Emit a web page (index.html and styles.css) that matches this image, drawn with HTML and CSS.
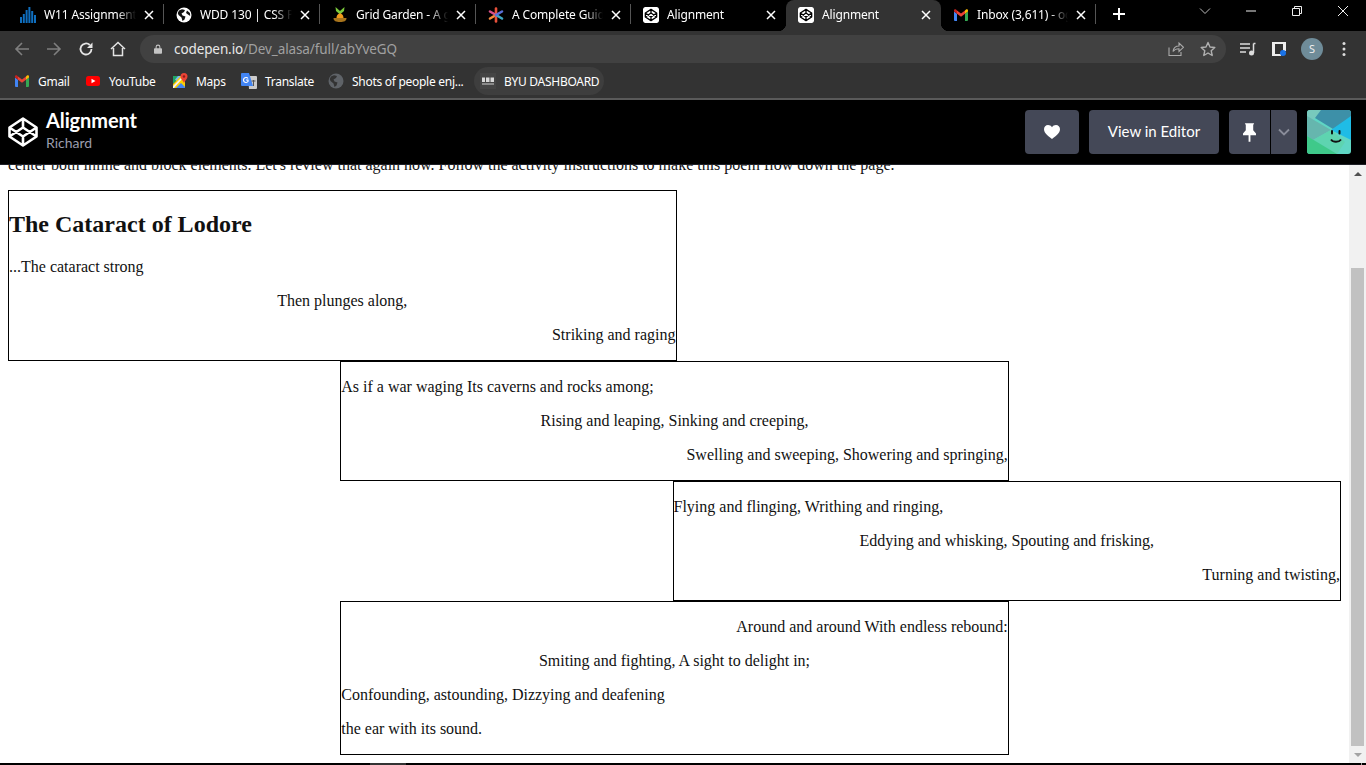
FILE: index.html
```html
<!DOCTYPE html>
<html lang="en">
<head>
<meta charset="utf-8">
<title>Alignment</title>
<link rel="stylesheet" href="styles.css">
</head>
<body>
<div class="browser">
  <div class="tabstrip">
    <div class="tab tab-wide tab-sep">
      <svg class="fav" viewBox="0 0 16 16"><path fill="#0f6fc0" d="M0 10h2v6H0zM2.800 7h2v9h-2zM5.600 3h2v13h-2zM8.400 0h2v16h-2zM11.200 4h2v12h-2zM14 8h2v8h-2z"/></svg>
      <span class="tab-title">W11 Assignment: CSS</span><svg class="tab-x" viewBox="0 0 10 10"><path d="M1 1 9 9M9 1 1 9"/></svg>
    </div>
    <div class="tab tab-wide tab-sep">
      <svg class="fav" viewBox="0 0 16 16"><circle cx="8" cy="8" r="7.500" fill="#fff"/><path fill="#111" d="M3 3.500 6 2.200 9 3 8 5 5.500 6.500 6.500 8.500 9.500 9.500 8.500 12.500 6.500 14 5.500 10.500 2.500 8 1.800 6ZM11 3.500 14 6 14.200 9 12 7.500 10 6Z"/></svg>
      <span class="tab-title">WDD 130 | CSS Positioning</span><svg class="tab-x" viewBox="0 0 10 10"><path d="M1 1 9 9M9 1 1 9"/></svg>
    </div>
    <div class="tab tab-wide tab-sep">
      <svg class="fav" viewBox="0 0 16 16"><path fill="#7ccb3c" d="M3.500 0 8 4 12.500 0 12 4 8 7.500 4 4Z"/><path fill="#f09a1c" d="M8 6.500C10.500 6.500 11.500 9 11.500 11H4.500C4.500 9 5.500 6.500 8 6.500Z"/><path fill="#a8741c" d="M1.500 11H14.500C14.500 14 12 15 8 15S1.500 14 1.500 11Z"/></svg>
      <span class="tab-title">Grid Garden - A game</span><svg class="tab-x" viewBox="0 0 10 10"><path d="M1 1 9 9M9 1 1 9"/></svg>
    </div>
    <div class="tab tab-sep">
      <svg class="fav" viewBox="0 0 16 16"><g stroke-width="2.600" stroke-linecap="round"><path stroke="#e8503a" d="M8 8V1.500"/><path stroke="#d94f8a" d="M8 8 2 4.500"/><path stroke="#f58a3c" d="M8 8 2 11.500"/><path stroke="#e8503a" d="M8 8V14.500"/><path stroke="#3fa7c4" d="M8 8 14 11.500"/><path stroke="#5a6fd8" d="M8 8 14 4.500"/></g></svg>
      <span class="tab-title">A Complete Guide to Flexbox</span><svg class="tab-x" viewBox="0 0 10 10"><path d="M1 1 9 9M9 1 1 9"/></svg>
    </div>
    <div class="tab">
      <svg class="fav fav-cp" viewBox="0 0 24 24"><rect width="24" height="24" rx="3" fill="#fff"/><g fill="none" stroke="#000" stroke-width="2" stroke-linejoin="round"><path d="M12 3.500 20.500 9V15L12 20.500 3.500 15V9ZM3.500 9 12 15 20.500 9M3.500 15 12 9 20.500 15M12 3.500V9M12 15V20.500"/></g></svg>
      <span class="tab-title">Alignment</span><svg class="tab-x" viewBox="0 0 10 10"><path d="M1 1 9 9M9 1 1 9"/></svg>
    </div>
    <div class="tab tab-active">
      <svg class="fav fav-cp" viewBox="0 0 24 24"><rect width="24" height="24" rx="3" fill="#fff"/><g fill="none" stroke="#000" stroke-width="2" stroke-linejoin="round"><path d="M12 3.500 20.500 9V15L12 20.500 3.500 15V9ZM3.500 9 12 15 20.500 9M3.500 15 12 9 20.500 15M12 3.500V9M12 15V20.500"/></g></svg>
      <span class="tab-title">Alignment</span><svg class="tab-x" viewBox="0 0 10 10"><path d="M1 1 9 9M9 1 1 9"/></svg>
    </div>
    <div class="tab tab-sep">
      <svg class="fav" viewBox="0 0 16 16"><path fill="#4285f4" d="M1 14V4.500L4 6.750V14H2a1 1 0 0 1-1-1Z"/><path fill="#34a853" d="M12 14V6.750L15 4.500V13a1 1 0 0 1-1 1Z"/><path fill="#ea4335" d="M4 6.750 8 9.750 12 6.750V3.400L8 6.400 4 3.400Z"/><path fill="#fbbc04" d="M12 6.750 15 4.500V3.500C15 2.400 13.800 1.900 13 2.600L12 3.400Z"/><path fill="#c5221f" d="M1 4.500 4 6.750V3.400L3 2.600C2.200 1.900 1 2.400 1 3.500Z"/></svg>
      <span class="tab-title">Inbox (3,611) - ogunbi</span><svg class="tab-x" viewBox="0 0 10 10"><path d="M1 1 9 9M9 1 1 9"/></svg>
    </div>
    <svg class="newtab" viewBox="0 0 14 14"><path d="M7 1V13M1 7H13" stroke="#fff" stroke-width="2"/></svg>
    <div class="winctl">
      <svg class="win" viewBox="0 0 12 12"><path d="M1 3.500 6 8.500 11 3.500" fill="none" stroke="#bbb"/></svg>
      <svg class="win" viewBox="0 0 12 12"><path d="M1 6H11" stroke="#eee"/></svg>
      <svg class="win" viewBox="0 0 12 12"><path d="M1.500 3.500H8.500V10.500H1.500ZM3.500 3.500V1.500H10.500V8.500H8.500" fill="none" stroke="#eee"/></svg>
      <svg class="win" viewBox="0 0 12 12"><path d="M1 1 11 11M11 1 1 11" stroke="#eee"/></svg>
    </div>
  </div>

  <div class="toolbar">
    <svg class="tool dim" viewBox="0 0 16 16"><path d="M15 8H2M8 2 2 8 8 14" fill="none" stroke="currentColor" stroke-width="1.600"/></svg>
    <svg class="tool dim" viewBox="0 0 16 16"><path d="M1 8H14M8 2 14 8 8 14" fill="none" stroke="currentColor" stroke-width="1.600"/></svg>
    <svg class="tool" viewBox="0 0 16 16"><path d="M13.500 8A5.500 5.500 0 1 1 11.800 4" fill="none" stroke="currentColor" stroke-width="1.800"/><path fill="currentColor" d="M14.500 1.500V7H9Z"/></svg>
    <svg class="tool" viewBox="0 0 16 16"><path d="M1 8 8 1.500 15 8M3.500 7V14.500H12.500V7" fill="none" stroke="currentColor" stroke-width="1.500"/></svg>
    <div class="omnibox">
      <svg class="lock" viewBox="0 0 10 12"><path fill="#c4c4c4" d="M1 5H2V3.500a3 3 0 0 1 6 0V5H9a1 1 0 0 1 1 1V11a1 1 0 0 1-1 1H1a1 1 0 0 1-1-1V6a1 1 0 0 1 1-1ZM3.300 5H6.700V3.500a1.700 1.700 0 0 0-3.400 0Z"/></svg>
      <span class="url"><span class="url-host">codepen.io</span>/Dev_alasa/full/abYveGQ</span>
      <svg class="omni-ico" viewBox="0 0 16 16"><path d="M1 6.500V14.500H13V11M5 10.500C5.500 7 8 5 11 5V2L15.500 6.300 11 10.500V7.800C8.500 7.800 6.500 8.500 5 10.500Z" fill="none" stroke="#aaa" stroke-width="1.100"/></svg>
      <svg class="omni-ico" viewBox="0 0 16 16"><path d="M8 1.500 10 6 14.800 6.500 11.200 9.700 12.200 14.500 8 12 3.800 14.500 4.800 9.700 1.200 6.500 6 6Z" fill="none" stroke="#b0b0b0" stroke-width="1.400" stroke-linejoin="round"/></svg>
    </div>
    <svg class="tool tool-media" viewBox="0 0 16 16"><path d="M0 3H10M0 7H10M0 11H6" stroke="#ddd" stroke-width="1.500"/><path d="M13.500 2.500H15.500M13.500 2.500V12" stroke="#ddd" stroke-width="1.500" fill="none"/><circle cx="11.500" cy="12" r="2.500" fill="#ddd"/></svg>
    <svg class="tool tool-ext" viewBox="0 0 14 14"><path fill="#eee" d="M0 0H14V9H11V2H3V12H9V14H0Z"/><circle cx="11" cy="11" r="3" fill="#1a73e8"/></svg>
    <span class="avatar-s">S</span>
    <svg class="tool tool-dots" viewBox="0 0 4 16"><circle cx="2" cy="2.500" r="1.500" fill="#ddd"/><circle cx="2" cy="8" r="1.500" fill="#ddd"/><circle cx="2" cy="13.500" r="1.500" fill="#ddd"/></svg>
  </div>

  <div class="bookmarks">
    <span class="bm bm-gmail">
      <svg class="bm-ico" viewBox="0 0 16 16"><path fill="#4285f4" d="M1 14V4.500L4 6.750V14H2a1 1 0 0 1-1-1Z"/><path fill="#34a853" d="M12 14V6.750L15 4.500V13a1 1 0 0 1-1 1Z"/><path fill="#ea4335" d="M4 6.750 8 9.750 12 6.750V3.400L8 6.400 4 3.400Z"/><path fill="#fbbc04" d="M12 6.750 15 4.500V3.500C15 2.400 13.800 1.900 13 2.600L12 3.400Z"/><path fill="#c5221f" d="M1 4.500 4 6.750V3.400L3 2.600C2.200 1.900 1 2.400 1 3.500Z"/></svg>Gmail</span>
    <span class="bm bm-yt">
      <svg class="bm-ico" viewBox="0 0 16 16"><rect x="1" y="3" width="14" height="10" rx="2.500" fill="#f00"/><path fill="#fff" d="M6.500 5.800 10.500 8 6.500 10.200Z"/></svg>YouTube</span>
    <span class="bm bm-maps">
      <svg class="bm-ico" viewBox="0 0 16 16"><path fill="#1fa463" d="M1 3H9L1 11Z"/><path fill="#7cb7e8" d="M6 3H10.500L5 8.500 3 6.500Z"/><path fill="#fbd000" d="M1 11 9 3 13 7V15H1Z"/><path fill="#4285f4" d="M4 15 9 10 13 14V15Z"/><path fill="#f2f2f2" d="M1 13 9.500 4.500 10.500 5.500 2 15H1Z"/><path fill="#ea4335" d="M12 0a3.500 3.500 0 0 1 3.500 3.500C15.500 6 13 7.500 12 10 11 7.500 8.500 6 8.500 3.500A3.500 3.500 0 0 1 12 0Z"/><circle cx="12" cy="3.500" r="1.200" fill="#8c1d18"/></svg>Maps</span>
    <span class="bm bm-tr">
      <svg class="bm-ico" viewBox="0 0 16 16"><path fill="#ccc" d="M7 3H15a1 1 0 0 1 1 1V15a1 1 0 0 1-1 1H8Z"/><path fill="#4285f4" d="M1 0H8L12 13H1a1 1 0 0 1-1-1V1a1 1 0 0 1 1-1Z"/><path fill="none" stroke="#fff" stroke-width="1.200" d="M7 5.500A2.500 2.500 0 1 0 7 8.500V7H5"/><path fill="none" stroke="#555" d="M10.500 8H14.500M12.500 7V13"/></svg>Translate</span>
    <span class="bm bm-globe">
      <svg class="bm-ico" viewBox="0 0 16 16"><circle cx="8" cy="8" r="7.500" fill="#5f6368"/><path fill="#333" d="M3 3.500 6 2.200 9 3 8 5 5.500 6.500 6.500 8.500 9.500 9.500 8.500 12.500 6.500 14 5.500 10.500 2.500 8 1.800 6Z"/></svg>Shots of people enj...</span>
    <span class="bm bm-chip">
      <svg class="bm-ico" viewBox="0 0 16 16"><rect width="16" height="16" fill="#454545"/><path fill="#d8d8d8" d="M2 4.500H5V9H2ZM6 4.500H9.500V9H6ZM10.500 4.500H14V9H10.500Z"/><rect x="2" y="10" width="12" height="2" fill="#8a8a8a"/></svg>BYU DASHBOARD</span>
  </div>
</div>

<header class="cp-header">
  <svg class="cp-logo" viewBox="0 0 30 30"><path d="M15 1.500 28.500 10.500V19.500L15 28.500 1.500 19.500V10.500ZM1.500 10.500 15 19.500 28.500 10.500M1.500 19.500 15 10.500 28.500 19.500M15 1.500V10.500M15 19.500V28.500" fill="none" stroke="#fff" stroke-width="2.600" stroke-linejoin="round"/></svg>
  <div class="cp-titles">
    <h1 class="cp-title">Alignment</h1>
    <div class="cp-author">Richard</div>
  </div>
  <div class="cp-actions">
    <button class="cp-btn cp-heart"><svg class="ico-heart" viewBox="0 0 16 14"><path fill="#fff" d="M8 14C5 11.500 0 8.500 0 4.200 0 1.800 1.800 0 4 0 5.600 0 7.200.8 8 2.300 8.800.8 10.400 0 12 0 14.200 0 16 1.800 16 4.200 16 8.500 11 11.500 8 14Z"/></svg></button>
    <button class="cp-btn cp-view">View in Editor</button>
    <div class="cp-split">
      <button class="cp-btn cp-pin"><svg class="ico-pin" viewBox="0 0 14 20"><path fill="#fff" d="M2 0H12L11 2V7.500L14 11V13H8V20H6V13H0V11L3 7.500V2Z"/></svg></button>
      <button class="cp-btn cp-drop"><svg class="ico-chev" viewBox="0 0 12 8"><path d="M1 1.500 6 6.500 11 1.500" fill="none" stroke="#8a8d9a" stroke-width="1.800"/></svg></button>
    </div>
    <svg class="cp-avatar" viewBox="0 0 44 44"><rect width="44" height="44" fill="#5fd6c4"/><path fill="#78c9bd" d="M0 0H20L0 14Z"/><path fill="#3d90a8" d="M14 0H44V8L26 19 8 8Z"/><path fill="#66b6ae" d="M0 6 24 20 6 30 0 26Z"/><path fill="#1fbce6" d="M44 6V30L24 20Z"/><path fill="#5ed4b0" d="M6 30 24 20 38 32 30 44Z"/><path fill="#3fc98a" d="M0 26 30 44H0Z"/><rect x="24" y="20" width="2" height="4.500" rx="1" fill="#111"/><rect x="31.500" y="20" width="2" height="4.500" rx="1" fill="#111"/><path d="M24 29.500C26 32.500 32 32.500 34 29.500" fill="none" stroke="#111" stroke-width="1.800"/></svg>
  </div>
</header>

<main class="viewport">
  <div class="page">
    <p class="intro">center both inline and block elements. Let's review that again now. Follow the activity instructions to make this poem flow down the page.</p>
    <div class="poem">
      <section class="stanza stanza-start">
        <h2>The Cataract of Lodore</h2>
        <p>...The cataract strong</p>
        <p class="mid">Then plunges along,</p>
        <p class="end">Striking and raging</p>
      </section>
      <section class="stanza stanza-center">
        <p>As if a war waging Its caverns and rocks among;</p>
        <p class="mid">Rising and leaping, Sinking and creeping,</p>
        <p class="end">Swelling and sweeping, Showering and springing,</p>
      </section>
      <section class="stanza stanza-end">
        <p>Flying and flinging, Writhing and ringing,</p>
        <p class="mid">Eddying and whisking, Spouting and frisking,</p>
        <p class="end">Turning and twisting,</p>
      </section>
      <section class="stanza stanza-center">
        <p class="end">Around and around With endless rebound:</p>
        <p class="mid">Smiting and fighting, A sight to delight in;</p>
        <p>Confounding, astounding, Dizzying and deafening</p>
        <p>the ear with its sound.</p>
      </section>
    </div>
  </div>
  <div class="scrollbar">
    <div class="sb-btn"><span class="sb-up"></span></div>
    <div class="sb-track"><div class="sb-thumb"></div></div>
    <div class="sb-btn"><span class="sb-down"></span></div>
  </div>
</main>
<div class="taskbar"><span class="task-active"></span><span class="task-tick"></span></div>
</body>
</html>
```

FILE: styles.css
```css
* { box-sizing: border-box; }
html, body { margin: 0; padding: 0; }
body {
  width: 1366px;
  height: 765px;
  overflow: hidden;
  display: flex;
  flex-direction: column;
  background: #fff;
  font-family: "Liberation Serif", serif;
}
.browser { flex: none; font-family: "Noto Sans", sans-serif; color: #fff; }

/* tabs */
.tabstrip {
  height: 31px;
  background: #000;
  display: flex;
  align-items: stretch;
  padding-left: 8px;
}
.tab {
  width: 155px;
  height: 31px;
  padding: 0 10px 2px 12px;
  display: flex;
  align-items: center;
  font-size: 12px;
  letter-spacing: -0.15px;
  position: relative;
  flex: none;
}
.tab-wide { width: 156px; }
.tab-sep::after {
  content: "";
  position: absolute;
  right: 0;
  top: 4px;
  width: 1px;
  height: 20px;
  background: #555;
}
.tab-active { background: #333; border-radius: 8px 8px 0 0; }
.tab-active::before,
.tab-active::after {
  content: "";
  position: absolute;
  bottom: 0;
  width: 8px;
  height: 8px;
}
.tab-active::before { left: -8px; background: radial-gradient(circle at 0 0, transparent 8px, #333 8.5px); }
.tab-active::after { right: -8px; background: radial-gradient(circle at 100% 0, transparent 8px, #333 8.5px); }
.fav { width: 16px; height: 16px; flex: none; margin-right: 8px; }
.fav-cp { border-radius: 2px; }
.tab-title {
  flex: 1;
  min-width: 0;
  white-space: nowrap;
  overflow: hidden;
  -webkit-mask-image: linear-gradient(90deg, #000 80%, transparent 100%);
  mask-image: linear-gradient(90deg, #000 80%, transparent 100%);
}
.tab-x { flex: none; width: 10px; height: 10px; margin-left: 8px; fill: none; stroke: #fff; stroke-width: 1.500; }
.newtab { width: 14px; height: 14px; flex: none; align-self: center; margin: -3px 0 0 16px; }
.winctl { margin-left: auto; display: flex; height: 24px; }
.win { width: 46px; height: 12px; margin-top: 5px; flex: none; }

/* toolbar */
.toolbar {
  height: 35px;
  background: #333;
  display: flex;
  align-items: center;
  padding-left: 14px;
}
.tool { width: 16px; height: 16px; flex: none; color: #e4e4e4; margin-right: 16px; }
.tool.dim { color: #7f7f7f; }
.omnibox {
  width: 1086px;
  height: 28px;
  margin-left: -2px;
  border-radius: 14px;
  background: #414141;
  display: flex;
  align-items: center;
  padding-left: 14px;
  padding-right: 10px;
  flex: none;
}
.lock { width: 8px; height: 10px; flex: none; margin-right: 12px; }
.url { flex: 1; font-size: 13.5px; letter-spacing: -0.1px; color: #a0a0a0; white-space: nowrap; }
.url-host { color: #e8e8e8; }
.omni-ico { width: 16px; height: 16px; flex: none; margin-left: 16px; }
.tool-media { margin: 0 0 0 14px; }
.tool-ext { width: 14px; height: 14px; margin: 0 0 0 16px; }
.avatar-s {
  width: 22px; height: 22px; border-radius: 50%; flex: none;
  background: #6f8c99; color: #eee; font-size: 11px; line-height: 22px; text-align: center;
  margin-left: 15px;
}
.tool-dots { width: 4px; height: 16px; margin: 0 0 0 19px; }

/* bookmarks */
.bookmarks {
  height: 34px;
  background: #333;
  border-bottom: 2px solid #5a5a5a;
  display: flex;
  align-items: center;
  padding: 0 0 2px 14px;
  font-size: 12px;
  letter-spacing: -0.28px;
}
.bm { display: flex; align-items: center; white-space: nowrap; flex: none; }
.bm-ico { width: 16px; height: 16px; flex: none; margin-right: 8px; }
.bm-gmail { width: 71px; }
.bm-yt { width: 87px; }
.bm-maps { width: 69px; }
.bm-tr { width: 87px; }
.bm-globe { width: 146px; }
.bm-chip { height: 28px; width: 130px; padding-left: 6px; border-radius: 14px; background: #3e3e3e; }

/* codepen header */
.cp-header {
  height: 65px;
  flex: none;
  background: #000;
  border-bottom: 1px solid #1e1f26;
  display: flex;
  align-items: center;
  padding: 0 15px 0 8px;
  font-family: Lato, sans-serif;
}
.cp-logo { width: 30px; height: 30px; flex: none; margin-right: 8px; }
.cp-titles { display: flex; flex-direction: column; padding-bottom: 4px; }
.cp-title { margin: 0; font-size: 20px; line-height: 24px; font-weight: 700; color: #fff; letter-spacing: -0.1px; }
.cp-author { font-size: 14px; line-height: 18px; color: #9b9dad; margin-top: 2px; }
.cp-actions { margin-left: auto; display: flex; align-items: center; gap: 10px; }
.cp-btn {
  height: 44px;
  border: 0;
  background: #444857;
  border-radius: 4px;
  color: #fff;
  padding: 0;
  display: flex;
  align-items: center;
  justify-content: center;
  font: 400 15px Lato, sans-serif;
}
.cp-heart { width: 54px; }
.cp-view { width: 130px; padding-bottom: 2px; }
.cp-split { display: flex; gap: 1px; }
.cp-pin { width: 41px; border-radius: 4px 0 0 4px; }
.cp-drop { width: 26px; border-radius: 0 4px 4px 0; }
.ico-heart { width: 16px; height: 14px; }
.ico-pin { width: 13px; height: 19px; }
.ico-chev { width: 12px; height: 8px; }
.cp-avatar { width: 44px; height: 44px; border-radius: 3px; flex: none; }

/* page */
.viewport { flex: 1; min-height: 0; display: flex; overflow: hidden; color: #111; }
.page { flex: 1; min-width: 0; padding: 0 8px; overflow: hidden; font-size: 16px; }
.intro { margin: -9px 0 16px; line-height: 18px; white-space: nowrap; }
.poem { display: flex; flex-direction: column; }
.stanza { width: 668.5px; border: 1px solid #000; }
.stanza-start { align-self: flex-start; }
.stanza-center { align-self: center; }
.stanza-end { align-self: flex-end; }
.stanza h2 { margin: 19.92px 0; font-size: 24px; line-height: 27px; font-weight: 700; }
.stanza p { margin: 16px 0; line-height: 18px; }
.mid { text-align: center; }
.end { text-align: right; }

/* scrollbar */
.scrollbar { width: 17px; flex: none; background: #f1f1f1; display: flex; flex-direction: column; }
.sb-btn { height: 17px; flex: none; display: flex; align-items: center; justify-content: center; }
.sb-up { width: 0; height: 0; border: 4px solid transparent; border-top: 0; border-bottom: 4px solid #505050; }
.sb-down { width: 0; height: 0; border: 4px solid transparent; border-bottom: 0; border-top: 4px solid #a3a3a3; }
.sb-track { flex: 1; display: flex; flex-direction: column; justify-content: flex-end; padding: 0 2px; }
.sb-thumb { height: 478px; background: #c1c1c1; }

.taskbar { height: 2px; flex: none; background: #000; padding-left: 370px; display: flex; }
.task-active { width: 36px; height: 2px; background: #333; }
.task-tick { width: 1px; height: 2px; margin-left: 955px; background: #999; }
```
